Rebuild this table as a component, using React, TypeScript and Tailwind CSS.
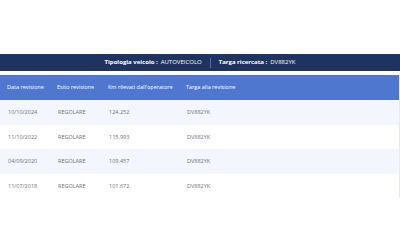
import React from 'react';

const rows = [
  { data: '10/10/2024', esito: 'REGOLARE', km: '124.252', targa: 'DV882YK' },
  { data: '11/10/2022', esito: 'REGOLARE', km: '115.993', targa: 'DV882YK' },
  { data: '04/09/2020', esito: 'REGOLARE', km: '109.457', targa: 'DV882YK' },
  { data: '11/07/2018', esito: 'REGOLARE', km: '101.672', targa: 'DV882YK' },
];

const App: React.FC = () => {
  return (
    <div className="w-[400px] h-[250px] bg-white pt-[54px] font-['Open_Sans',sans-serif]">
      <div className="h-[17px] bg-[#1e335f] flex items-center justify-center text-[6px] text-white">
        <span className="font-bold">Tipologia veicolo :</span>
        <span className="ml-[3px]">AUTOVEICOLO</span>
        <span className="mx-[8px] h-[10px] w-px bg-[#5c6f96]" />
        <span className="font-bold">Targa ricercata :</span>
        <span className="ml-[3px]">DV882YK</span>
      </div>
      <div className="mt-[4px] border-r border-[#e4e9f2]">
        <div className="h-[25px] bg-[#4f77cf] grid grid-cols-[50px_51px_78px_1fr] items-center pl-[7px] text-[5.5px] font-medium text-white">
          <span>Data revisione</span>
          <span>Esito revisione</span>
          <span>Km rilevati dall'operatore</span>
          <span>Targa alla revisione</span>
        </div>
        {rows.map((r, i) => (
          <div
            key={i}
            className={`h-[24.5px] grid grid-cols-[50px_51px_78px_1fr] items-center pl-[8px] text-[5.5px] text-[#6b707b] ${
              i % 2 === 0 ? 'bg-[#f3f6fc]' : 'bg-white'
            }`}
          >
            <span>{r.data}</span>
            <span>{r.esito}</span>
            <span>{r.km}</span>
            <span>{r.targa}</span>
          </div>
        ))}
      </div>
    </div>
  );
};

export default App;
